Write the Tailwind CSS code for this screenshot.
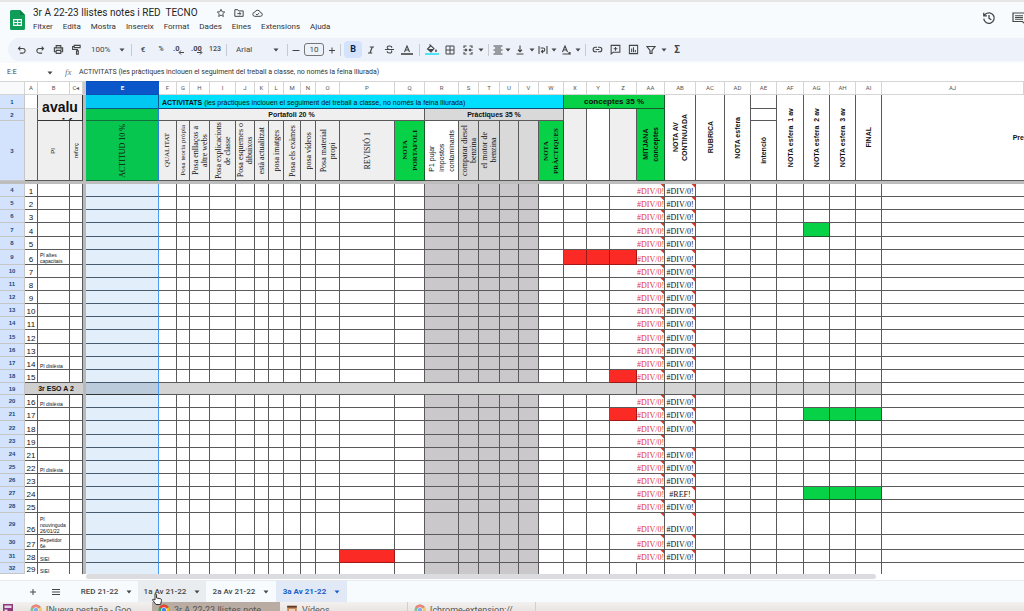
<!DOCTYPE html>
<html lang="ca">
<head>
  <meta charset="UTF-8" />
  <meta name="viewport" content="width=device-width, initial-scale=1.0" />
  <title>3r A 22-23 llistes notes i RED TECNO</title>
  <script src="https://cdn.jsdelivr.net/npm/@tailwindcss/browser@4"></script>
</head>
<body class="flex h-screen flex-col overflow-hidden bg-[#f8fbfe] font-[Roboto,'Liberation_Sans',sans-serif] text-[#444746]">
  <!-- shared symbols -->
  <svg class="hidden">
    <symbol id="caret" viewBox="0 0 6 4"><path d="M.5.5h5L3 3.5z" fill="currentColor" /></symbol>
    <symbol id="chrome" viewBox="0 0 24 24">
      <circle cx="12" cy="12" r="11" fill="#34a853" />
      <path d="M12 12 2.5 6.500A11 11 0 0 1 21.500 6.500z" fill="#ea4335" />
      <path d="M12 12 21.500 6.500A11 11 0 0 1 12 23z" fill="#fbbc05" />
      <circle cx="12" cy="12" r="5.500" fill="#fff" /><circle cx="12" cy="12" r="4.300" fill="#4285f4" />
    </symbol>
  </svg>

  <header class="flex h-[38px] shrink-0 items-start border-t-2 border-[#e6e6e6] pl-2.5">
    <svg class="mt-2 h-5 w-[15px]" viewBox="0 0 15 20">
      <path d="M1.500 0H10l5 5v13.500a1.500 1.500 0 0 1-1.500 1.500h-12A1.500 1.500 0 0 1 0 18.500v-17A1.500 1.500 0 0 1 1.500 0z" fill="#0f9d58" />
      <path d="M10 0l5 5h-5z" fill="#087f43" />
      <path d="M3 9h9v7H3zM4.200 10.200v1.700H7v-1.700zm3.900 0v1.700h2.700v-1.700zM4.200 13v1.800H7V13zm3.900 0v1.800h2.700V13z" fill="#fff" fill-rule="evenodd" />
    </svg>
    <div class="ml-2 mt-1 flex-1">
      <div class="flex h-[14px] items-center">
        <h1 class="whitespace-pre text-[10px] leading-[14px] text-[#1f1f1f]">3r A 22-23 llistes notes i RED  TECNO</h1>
        <div class="ml-[18px] flex gap-2 text-[#444746]">
          <button aria-label="Destaca"><svg class="size-2.5" viewBox="0 0 24 24" fill="none" stroke="currentColor" stroke-width="2.200"><path d="M12 3l2.700 6 6.300.6-4.800 4.300 1.500 6.500L12 17l-5.700 3.400 1.500-6.500L3 9.600 9.300 9z" /></svg></button>
          <button aria-label="Mou"><svg class="size-2.5" viewBox="0 0 24 24" fill="none" stroke="currentColor" stroke-width="2.400"><path d="M2 4h7l2 3h11v13H2zM8 13.500h8M13 10l3.500 3.500L13 17" /></svg></button>
          <button aria-label="Estat del document"><svg class="h-2.5 w-[11px]" viewBox="0 0 26 24" fill="none" stroke="currentColor" stroke-width="2.300"><path d="M7 20a5 5 0 0 1-.5-10A7 7 0 0 1 20 11a4.500 4.500 0 0 1 0 9zM9 14l3 3 5-5" /></svg></button>
        </div>
      </div>
      <nav class="flex h-[14px] items-center gap-2.5 text-[8px] text-[#333]">
        <button>Fitxer</button><button>Edita</button><button>Mostra</button><button>Insereix</button><button>Format</button><button>Dades</button><button>Eines</button><button>Extensions</button><button>Ajuda</button>
      </nav>
    </div>
    <button class="mt-[9px]" aria-label="Historial"><svg class="size-[14px]" viewBox="0 0 24 24" fill="none" stroke="currentColor" stroke-width="2.200"><path d="M3 13a9 9 0 1 0 2.700-7.400L3 8M3 3v5.500h5.500M12 7v5.500l4 2.500" /></svg></button>
    <button class="ml-4 mt-2.5 w-3 overflow-hidden" aria-label="Comentaris"><svg class="h-[13px] w-[14px]" viewBox="0 0 28 26" fill="none" stroke="currentColor" stroke-width="2.400"><path d="M2 2h24v22l-5-5H2zM6 7.500h16M6 11h16M6 14.500h16" /></svg></button>
  </header>

  <!-- toolbar -->
  <div class="ml-2 flex h-[23px] shrink-0 items-center rounded-l-full bg-[#ecf1fa] pl-[5px] text-[8px]">
    <button class="flex w-[18px] justify-center" aria-label="Desfés"><svg class="size-2.5" viewBox="0 0 24 24" fill="none" stroke="currentColor" stroke-width="2.600"><path d="M8 4L3.500 8.500 8 13M4 8.500h10a5.500 5.500 0 0 1 0 11H7" /></svg></button>
    <button class="flex w-[18px] justify-center" aria-label="Refés"><svg class="size-2.5" viewBox="0 0 24 24" fill="none" stroke="currentColor" stroke-width="2.600"><path d="M16 4l4.500 4.500L16 13M20 8.500H10a5.500 5.500 0 0 0 0 11h7" /></svg></button>
    <button class="flex w-[18px] justify-center" aria-label="Imprimeix"><svg class="size-[11px]" viewBox="0 0 24 24" fill="none" stroke="currentColor" stroke-width="2.400"><path d="M7 8V3.500h10V8M7 17H3V8.500h18V17h-4M7 14h10v6.500H7zM17 11.300h2" /></svg></button>
    <button class="flex w-[18px] justify-center" aria-label="Copia el format"><svg class="size-[11px]" viewBox="0 0 24 24" fill="none" stroke="currentColor" stroke-width="2.400"><path d="M7 3h13v5H7zM7 5.500H3.500V12H14v3M12 15h4v7h-4z" /></svg></button>
    <label class="flex w-[44px] items-center pl-1.5"><select aria-label="Zoom" class="w-[28px] appearance-none text-[8px]"><option>100%</option></select><svg class="h-1 w-1.5"><use href="#caret" /></svg></label>
    <i class="mx-0.5 h-3 w-px bg-[#c7cbd1]"></i>
    <button class="w-[18px] font-medium">€</button>
    <button class="w-[18px] text-[7px] font-medium">%</button>
    <button class="flex w-[18px] justify-center" aria-label="Menys decimals"><svg class="h-[11px] w-3" viewBox="0 0 24 22"><text x="0" y="13" font-size="15" font-weight="700" fill="currentColor">.0</text><path d="M22 17h-9M16 13l-4 4 4 4" fill="none" stroke="currentColor" stroke-width="2" /></svg></button>
    <button class="flex w-[18px] justify-center" aria-label="Més decimals"><svg class="h-[11px] w-3" viewBox="0 0 24 22"><text x="0" y="13" font-size="15" font-weight="700" fill="currentColor">.00</text><path d="M12 17h9M18 13l4 4-4 4" fill="none" stroke="currentColor" stroke-width="2" /></svg></button>
    <button class="w-[18px] text-[7px] font-medium">123</button>
    <i class="mx-0.5 h-3 w-px bg-[#c7cbd1]"></i>
    <label class="flex w-14 items-center pl-[7px]"><select aria-label="Tipus de lletra" class="w-[37px] appearance-none text-[8px]"><option>Arial</option></select><svg class="h-1 w-1.5"><use href="#caret" /></svg></label>
    <i class="mx-0.5 h-3 w-px bg-[#c7cbd1]"></i>
    <button class="flex w-3 justify-center" aria-label="Redueix"><svg class="size-2" viewBox="0 0 8 8" stroke="currentColor"><path d="M.5 4.500h7" /></svg></button>
    <input aria-label="Mida de la lletra" value="10" class="mx-0.5 h-[13px] w-5 rounded-[3px] border border-[#747775] text-center text-[8px]" />
    <button class="flex w-3 justify-center" aria-label="Augmenta"><svg class="size-2" viewBox="0 0 8 8" stroke="currentColor"><path d="M1 4.500h6M4 1.500v6" /></svg></button>
    <i class="mx-0.5 h-3 w-px bg-[#c7cbd1]"></i>
    <div class="flex items-center px-px">
      <button class="flex h-[17px] w-[18px] items-center justify-center rounded-sm bg-[#d3e3fd] text-[9px] font-bold text-[#041e49]">B</button>
      <button class="flex w-[18px] justify-center" aria-label="Cursiva"><svg class="size-2" viewBox="0 0 16 16" fill="none" stroke="currentColor" stroke-width="2.400"><path d="M5.500 2H14M2 14h8.500M10.500 2l-4.500 12" /></svg></button>
      <button class="flex w-[18px] justify-center" aria-label="Ratllat"><svg class="size-[11px]" viewBox="0 0 24 24" fill="none" stroke="currentColor" stroke-width="2.300"><path d="M2 12h20M17 8c0-5-10-5-10-.5 0 2 1.500 3 3 3.500M7 16c0 5 10 5 10 .5 0-1-.3-1.700-1-2.300" /></svg></button>
      <button class="flex w-[18px] flex-col items-center" aria-label="Color del text"><svg class="h-2 w-[14px]" viewBox="0 0 28 16" fill="none" stroke="currentColor" stroke-width="2.200"><path d="M9 14L14 2l5 12M11 10h6" /></svg><i class="h-0.5 w-3 bg-[#666]"></i></button>
    </div>
    <i class="mx-0.5 h-3 w-px bg-[#c7cbd1]"></i>
    <div class="flex items-center px-px">
      <button class="flex w-[18px] flex-col items-center" aria-label="Color d'emplenament"><svg class="h-[9px] w-3" viewBox="0 0 24 18"><path d="M7 1l9 8-6 7-7-6 6-6" fill="none" stroke="currentColor" stroke-width="2.200" /><path d="M4 10h11l-5 6zM20 10c3 4 2 6 0 6s-3-2 0-6z" fill="currentColor" /></svg><i class="h-0.5 w-3.5 bg-[#4be3f5]"></i></button>
      <button class="flex w-[18px] justify-center" aria-label="Vores"><svg class="size-2.5" viewBox="0 0 20 20" fill="none" stroke="currentColor" stroke-width="2"><path d="M2 2h16v16H2zM10 2v16M2 10h16" /></svg></button>
      <button class="flex w-[18px] justify-center" aria-label="Combina"><svg class="size-2.5" viewBox="0 0 20 20" fill="none" stroke="currentColor" stroke-width="2.200"><path d="M7 2H2v4M13 2h5v4M7 18H2v-4M13 18h5v-4M1 10h6M5 7.500L7.500 10 5 12.500M19 10h-6M15 7.500L12.500 10l2.500 2.500" /></svg></button>
      <svg class="mx-px h-1 w-1.5"><use href="#caret" /></svg>
    </div>
    <i class="mx-0.5 h-3 w-px bg-[#c7cbd1]"></i>
    <div class="flex items-center px-px">
      <button class="flex w-3 justify-center" aria-label="Alineació horitzontal"><svg class="size-2.5" viewBox="0 0 20 20" stroke="currentColor" stroke-width="2"><path d="M1 2h18M4 6h12M1 10h18M4 14h12M1 18h18" /></svg></button>
      <svg class="mx-px h-1 w-1.5"><use href="#caret" /></svg>
      <button class="flex w-4 justify-center" aria-label="Alineació vertical"><svg class="size-2.5" viewBox="0 0 20 20" fill="none" stroke="currentColor" stroke-width="2.200"><path d="M3 18h14M10 1v12M6 9.500l4 4 4-4" /></svg></button>
      <svg class="mx-px h-1 w-1.5"><use href="#caret" /></svg>
      <button class="flex w-3.5 justify-center" aria-label="Ajust del text"><svg class="size-2.5" viewBox="0 0 20 20" fill="none" stroke="currentColor" stroke-width="2.200"><path d="M2 2v16M18 2v16M5 6h5a3.500 3.500 0 0 1 0 7H7M10 10l-3 3 3 3" /></svg></button>
      <svg class="mx-px h-1 w-1.5"><use href="#caret" /></svg>
      <button class="flex w-4 justify-center" aria-label="Rotació del text"><svg class="size-2.5" viewBox="0 0 20 20" fill="none" stroke="currentColor" stroke-width="2.200"><path d="M3 14L8 2l5 12M5 10h6M3 18h14M15 15l3 3V14" /></svg></button>
      <svg class="mx-px h-1 w-1.5"><use href="#caret" /></svg>
    </div>
    <i class="mx-0.5 h-3 w-px bg-[#c7cbd1]"></i>
    <button class="flex w-[18px] justify-center" aria-label="Enllaç"><svg class="size-[11px]" viewBox="0 0 24 24" fill="none" stroke="currentColor" stroke-width="2.400"><path d="M11 7H7.500a5 5 0 0 0 0 10H11M13 7h3.500a5 5 0 0 1 0 10H13M8 12h8" /></svg></button>
    <button class="flex w-[18px] justify-center" aria-label="Comentari"><svg class="size-[11px]" viewBox="0 0 24 24" fill="none" stroke="currentColor" stroke-width="2.300"><path d="M2.500 3h19v15H7l-4.500 3.500zM12 6.500v8M8 10.500h8" /></svg></button>
    <button class="flex w-[18px] justify-center" aria-label="Gràfic"><svg class="size-[11px]" viewBox="0 0 24 24" fill="none" stroke="currentColor" stroke-width="2.300"><path d="M3 3h18v18H3zM8 10v8M12 7v11M16 13v5" /></svg></button>
    <button class="flex w-[18px] justify-center" aria-label="Filtre"><svg class="size-2.5" viewBox="0 0 20 20" fill="none" stroke="currentColor" stroke-width="2.400"><path d="M2 3h16l-6 8v6H8v-6z" /></svg></button>
    <svg class="mx-px h-1 w-1.5"><use href="#caret" /></svg>
    <button class="w-[18px] text-[10px] font-bold">Σ</button>
  </div>

  <!-- formula bar -->
  <div class="mt-0.5 flex h-[18px] shrink-0 items-center bg-white pl-[7px] pt-px text-[7px]">
    <input aria-label="Quadre de nom" value="E:E" class="w-10 text-[7px]" />
    <svg class="h-1 w-1.5"><use href="#caret" /></svg>
    <span class="ml-3 w-3.5 font-['Liberation_Serif',serif] text-[9px] italic text-[#777]">fx</span>
    <input aria-label="Barra de fórmules" value="ACTIVITATS (les pràctiques inclouen el seguiment del treball a classe, no només la feina lliurada)" class="flex-1 text-[7px] text-[#333]" />
  </div>

  <table class="w-full shrink-0 table-fixed border-separate border-spacing-0 bg-white font-['Liberation_Sans',Arial,sans-serif] text-[7px] leading-none text-[#111]">
    <colgroup id="cols"></colgroup>
    <thead>
      <tr id="letters" class="h-[14px] font-[Roboto,sans-serif] text-[6px] text-[#555]"></tr>
      <tr class="h-[14px]">
        <th class="border-b border-r border-[#c4c7c5] bg-[#d3e3fd] text-[6px] text-[#174a80]">1</th>
        <td class="border-b border-r border-b-[#ddd] border-r-[#5a5a5a] bg-white"></td>
        <td colspan="2" rowspan="2" class="border-b border-r border-[#333] bg-[#efeff0] p-0">
          <div class="flex h-[25px] items-center justify-center overflow-hidden text-center text-[14px] font-bold leading-[17px]">3a<br>avalu<br>ació</div>
        </td>
        <td rowspan="3" class="bg-[#b9b9b9]"></td>
        <td class="border-b border-r border-[#0b5b8a] bg-[#00c8f2]"></td>
        <td colspan="18" class="overflow-hidden whitespace-nowrap border-b border-r border-[#0b4b7a] bg-[#00dfff] pb-0 pl-[3px] pr-0 pt-0.5"><b>ACTIVITATS</b> (les pràctiques inclouen el seguiment del treball a classe, no només la feina lliurada)</td>
        <th colspan="4" class="border-b border-r border-[#1a5a2a] bg-[#07d146] p-0 text-[8px]">conceptes 35 %</th>
        <td rowspan="3" class="border-b border-r border-[#5a5a5a] p-0 text-center"><div class="inline-block rotate-180 whitespace-pre text-center align-middle font-bold leading-[9px] [writing-mode:vertical-rl]">NOTA AV
CONTINUADA</div></td>
        <td rowspan="3" class="border-b border-r border-[#5a5a5a] p-0 text-center"><div class="inline-block rotate-180 whitespace-pre align-middle font-bold leading-[9px] [writing-mode:vertical-rl]">RUBRICA</div></td>
        <td rowspan="3" class="border-b border-r border-[#5a5a5a] p-0 text-center"><div class="inline-block rotate-180 whitespace-pre align-middle font-bold leading-[9px] [writing-mode:vertical-rl]">NOTA esfera</div></td>
        <td class="border-b border-r border-[#5a5a5a]"></td>
        <td rowspan="3" class="border-b border-r border-[#5a5a5a] p-0 text-center"><div class="inline-block rotate-180 whitespace-pre align-middle font-bold leading-[9px] [writing-mode:vertical-rl]">NOTA esfera  1 av</div></td>
        <td rowspan="3" class="border-b border-r border-[#5a5a5a] p-0 text-center"><div class="inline-block rotate-180 whitespace-pre align-middle font-bold leading-[9px] [writing-mode:vertical-rl]">NOTA esfera  2 av</div></td>
        <td rowspan="3" class="border-b border-r border-[#5a5a5a] p-0 text-center"><div class="inline-block rotate-180 whitespace-pre align-middle font-bold leading-[9px] [writing-mode:vertical-rl]">NOTA esfera  3 av</div></td>
        <td rowspan="3" class="border-b border-r border-[#5a5a5a] p-0 text-center"><div class="inline-block rotate-180 whitespace-pre align-middle font-bold leading-[9px] [writing-mode:vertical-rl]">FINAL</div></td>
        <th rowspan="3" class="border-b border-[#5a5a5a] p-0 text-right">Pre</th>
      </tr>
      <tr class="h-3">
        <th class="border-b border-r border-[#c4c7c5] bg-[#d3e3fd] text-[6px] text-[#174a80]">2</th>
        <td rowspan="2" class="border-b border-r border-[#5a5a5a] bg-[#efeff0]"></td>
        <td class="border-b border-r border-[#14703a] border-r-[#2b7de0] bg-[#06c650]"></td>
        <th colspan="12" class="border-b border-r border-[#5a5a5a] bg-[#efeff0] p-0">Portafoli 20 %</th>
        <th colspan="6" class="border-b border-r border-[#5a5a5a] bg-[#d9d9da] p-0">Pràctiques 35 %</th>
        <td rowspan="2" class="border-b border-r border-[#5a5a5a] bg-[#efeff0]"></td>
        <td rowspan="2" class="border-b border-r border-[#5a5a5a]"></td>
        <td rowspan="2" class="border-b border-r border-[#5a5a5a] bg-[#efeff0]"></td>
        <td rowspan="2" class="border-b border-r border-[#1a5a2a] bg-[#07d146] p-0 text-center"><div class="inline-block rotate-180 whitespace-pre text-center align-middle font-bold leading-[10px] [writing-mode:vertical-rl]">MITJANA
conceptes</div></td>
        <td class="border-b border-r border-[#5a5a5a]"></td>
      </tr>
      <tr id="titles" class="h-[60px]">
        <th class="border-b border-r border-[#c4c7c5] bg-[#d3e3fd] text-[6px] text-[#174a80]">3</th>
      </tr>
      <tr class="h-[3px]"><td colspan="37" class="bg-[#bdbdbd] p-0"></td></tr>
    </thead>
    <tbody id="rows"></tbody>
  </table>

  <!-- horizontal scrollbar -->
  <div class="flex h-1.5 shrink-0 bg-white pl-[86px] pr-[148px]"><div class="h-[5px] flex-1 rounded-full bg-[#dadce0]"></div></div>

  <!-- sheet tabs -->
  <div class="flex h-[22px] shrink-0 items-stretch border-t border-[#e8ebee] pl-6 text-[8px] font-medium">
    <button class="flex w-[18px] items-center justify-center" aria-label="Afegeix un full"><svg class="size-2" viewBox="0 0 8 8" stroke="currentColor"><path d="M1 4h6M4 1v6" /></svg></button>
    <button class="ml-1 mr-[9px] flex w-5 items-center justify-center" aria-label="Tots els fulls"><svg class="size-2" viewBox="0 0 8 8" stroke="currentColor"><path d="M0 1.500h8M0 4h8M0 6.500h8" /></svg></button>
    <button class="flex w-[63px] items-center justify-center gap-2">RED 21-22<svg class="h-1 w-1.5"><use href="#caret" /></svg></button>
    <button class="relative flex w-[68px] items-center justify-center gap-2 bg-[#e9edf0]">1a Av 21-22<svg class="h-1 w-1.5"><use href="#caret" /></svg>
      <svg class="absolute left-3.5 top-3 z-10 h-3 w-2.5" viewBox="0 0 20 24"><path d="M6 2c2-1 3 0 3 2v6l8 1.500c2 .5 2 2 2 4L17 23H8l-7-9c0-2 2-2 5 0z" fill="#fff" stroke="#222" stroke-width="1.800" /></svg>
    </button>
    <button class="flex w-[70px] items-center justify-center gap-2">2a Av 21-22<svg class="h-1 w-1.5"><use href="#caret" /></svg></button>
    <button class="flex w-[71px] items-center justify-center gap-2 bg-[#e1e9f7] font-bold text-[#1a5fc8]">3a Av 21-22<svg class="h-1 w-1.5"><use href="#caret" /></svg></button>
  </div>

  <!-- desktop taskbar -->
  <div class="flex h-6 shrink-0 bg-linear-to-b from-[#f3f1f0] to-[#d8d0ca] text-[9px] text-[#555]">
    <div class="w-[25px] pl-[3px] pt-0.5"><svg class="size-2.5" viewBox="0 0 20 20"><path d="M0 0h20v20H0z" fill="#8b3a7b" /><path d="M3 3h14v5H3zM3 11h6v6H3z" fill="#e8d6e6" /></svg></div>
    <button class="flex w-[127px] items-start gap-1 pl-[5px] pt-0.5"><svg class="size-3 opacity-60"><use href="#chrome" /></svg><span class="leading-3">[Nueva pestaña - Goo…</span></button>
    <button class="flex w-32 items-start gap-1 bg-[#b9aca2] pl-1.5 pt-0.5"><svg class="size-3"><use href="#chrome" /></svg><span class="leading-3">3r A 22-23 llistes note…</span></button>
    <button class="flex w-32 items-start gap-1 border-r border-[#d5cfca] pl-1.5 pt-0.5"><svg class="size-3" viewBox="0 0 20 20"><path d="M2 3h16v14H2z" fill="#c98a5a" /><path d="M2 3h16v3H2z" fill="#5b3b2a" /><path d="M5 9h10v2H5z" fill="#fff" /></svg><span class="leading-3">Vídeos</span></button>
    <button class="flex w-32 items-start gap-1 border-r border-[#d5cfca] pl-1.5 pt-0.5"><svg class="size-3 opacity-60"><use href="#chrome" /></svg><span class="leading-3">[chrome-extension://…</span></button>
  </div>

  <script>
    // column letter, width (the last one takes what is left)
    const columns = [
      ["", 25], ["A", 13], ["B", 32], ["C", 13], ["|", 3], ["E", 73], ["F", 18], ["G", 13], ["H", 20], ["I", 26],
      ["J", 19], ["K", 14], ["L", 15], ["M", 17], ["N", 15], ["O", 24], ["P", 55], ["Q", 30], ["R", 34], ["S", 20],
      ["T", 21], ["U", 19], ["V", 20], ["W", 25], ["X", 23], ["Y", 23], ["Z", 27], ["AA", 28], ["AB", 31], ["AC", 29],
      ["AD", 26], ["AE", 26], ["AF", 27], ["AG", 26], ["AH", 26], ["AI", 26], ["AJ", 0]
    ];
    document.getElementById("cols").innerHTML = columns.map(c => c[1] ? `<col style="width:${c[1]}px">` : "<col>").join("");

    document.getElementById("letters").innerHTML = columns.map(([name]) => {
      if (name === "|") return `<th class="border-y border-[#d5d5d5] bg-[#c9c9c9] p-0"></th>`;
      if (name === "E") return `<th class="border-y border-[#0b50b8] bg-[#0b57c9] p-0 font-bold text-white">E</th>`;
      if (name === "") return `<th class="border-y border-r border-[#d5d5d5] bg-[#f8f9fa] p-0"></th>`;
      if (name === "C") return `<th class="border-y border-r border-[#d5d5d5] p-0 font-normal">C◂</th>`;
      return `<th class="border-y border-r border-[#d5d5d5] p-0 font-normal">${name}</th>`;
    }).join("");

    // row 3: rotated headings
    const light = "border-b border-r border-[#5a5a5a] bg-[#efeff0] p-0 text-center";
    const grey = "border-b border-r border-[#5a5a5a] bg-[#d9d9da] p-0 text-center";
    const green = "border-b border-r border-[#1a5a2a] bg-[#07d146] p-0 text-center";
    const sans = "inline-block rotate-180 whitespace-pre text-center align-middle text-[6px] leading-[9px] [writing-mode:vertical-rl]";
    const sansLeft = "inline-block rotate-180 whitespace-pre text-left align-middle leading-[10px] [writing-mode:vertical-rl]";
    const sansBold = "inline-block rotate-180 whitespace-pre text-center align-middle font-bold leading-[9px] [writing-mode:vertical-rl]";
    const caps = "inline-block rotate-180 whitespace-pre text-center align-middle font-['Liberation_Serif',serif] text-[7px] leading-[9px] [writing-mode:vertical-rl]";
    const serif = "inline-block rotate-180 whitespace-pre text-center align-middle font-['Liberation_Serif',serif] text-[8px] leading-[9px] [writing-mode:vertical-rl]";
    const serifBold = "inline-block rotate-180 whitespace-pre text-center align-middle font-['Liberation_Serif',serif] text-[7px] font-bold leading-[10px] [writing-mode:vertical-rl]";
    const titles = [
      ["PI", light, sans], ["reforç", light, sans],
      ["ACTITUD 10 %", "border-b border-r border-[#14703a] border-r-[#2b7de0] bg-[#06c650] p-0 text-center", serif],
      ["QUALITAT", light, caps], ["Posa teoria pròpia", light, caps], ["Posa enllaços a\naltre webs", light, serif],
      ["Posa explicacions\nde classe", light, serif], ["Posa esquemes o\ndibuixos", light, serif], ["està actualitzat", light, serif],
      ["posa imatges", light, serif], ["Posa els exàmes", light, serif], ["posa vídeos", light, serif],
      ["Posa material\npropi", light, serif], ["REVISIÓ 1", light, serif], ["NOTA\nPORTAFOLI", green, serifBold],
      ["P1 pujar\nimpostos\ncontaminants", "border-b border-r border-[#5a5a5a] bg-white p-0 text-center", sansLeft],
      ["comparar diesel\nbenzina", grey, serif], ["el motor de\nbenzina", grey, serif], ["", grey, serif], ["", grey, serif],
      ["NOTA\nPRÀCTIQUES", green, serifBold],
      ["intenció", "border-b border-r border-[#5a5a5a] p-0 text-center", sansBold]
    ];
    document.getElementById("titles").innerHTML += titles.map(([text, cell, label]) => `<td class="${cell}"><div class="${label}">${text}</div></td>`).join("");

    // sheet row, height, list number, note
    const rows = [
      [4, 13, 1], [5, 13, 2], [6, 13, 3], [7, 14, 4], [8, 13, 5], [9, 15, 6, "PI altes<br>capacitats"], [10, 13, 7],
      [11, 13, 8], [12, 13, 9], [13, 13, 10], [14, 13, 11], [15, 14, 12], [16, 13, 13], [17, 13, 14, "PI dislèxia"],
      [18, 13, 15], [19, 12], [20, 13, 16, "PI dislèxia"], [21, 13, 17], [22, 14, 18], [23, 13, 19], [24, 13, 21],
      [25, 13, 22, "PI dislèxia"], [26, 13, 23], [27, 13, 24], [28, 13, 25], [29, 22, 26, "PI<br>nouvinguda<br>26/01/22"],
      [30, 15, 27, "Repetidor<br>6è"], [31, 13, 28, "SIEI"], [32, 11, 29, "SIEI"]
    ];
    const red = ["X9", "Y9", "Z9", "Z18", "Z21", "P31"];
    const passed = ["AG7", "AG21", "AH21", "AI21", "AG27", "AH27", "AI27"];

    function cell(name, row, num, note) {
      const key = name + row;
      if (name === "") return `<th class="border-b border-r border-[#c4c7c5] bg-[#d3e3fd] p-0 text-[6px] text-[#174a80]">${row}</th>`;
      if (name === "|") return `<td class="bg-[#b9b9b9] p-0"></td>`;
      if (name === "A") return `<td class="border-b border-r border-[#5a5a5a] p-0 text-center align-bottom text-[8px]">${num}</td>`;
      if (name === "B") return `<td class="border-b border-r border-[#5a5a5a] py-0 pl-0.5 pr-0 align-bottom text-[5px] leading-[6px]">${note || ""}</td>`;
      if (name === "E") return `<td class="border-b border-r border-b-[#46586c] border-r-[#4a9cf2] bg-[#e3eefb] p-0"></td>`;
      if (red.includes(key)) return `<td class="border-b border-r border-[#a01818] bg-[#fb2a24] p-0"></td>`;
      if (passed.includes(key)) return `<td class="border-b border-r border-[#1a5a2a] bg-[#07d146] p-0"></td>`;
      if (["R", "S", "T", "U", "V"].includes(name)) return `<td class="border-b border-r border-[#5a5a5a] bg-[#cac8ca] p-0"></td>`;
      if (name === "Z" && row !== 32) return `<td class="border-b border-[#5a5a5a] p-0"></td>`;
      if (name === "AA" && row !== 32) return `<td class="overflow-hidden whitespace-nowrap border-b border-r border-[#5a5a5a] bg-[linear-gradient(225deg,#d8392b_2px,transparent_3px)] p-0 align-bottom font-['Liberation_Serif',serif] text-[8px] text-[#e0352b]">#DIV/0!</td>`;
      if (name === "AB" && row !== 32 && row !== 23) return `<td class="overflow-hidden whitespace-nowrap border-b border-r border-[#5a5a5a] bg-[linear-gradient(225deg,#d8392b_2px,transparent_3px)] p-0 text-center align-bottom font-['Liberation_Serif',serif] text-[8px]">${row === 27 ? "#REF!" : "#DIV/0!"}</td>`;
      if (name === "AJ") return `<td class="border-b border-[#5a5a5a] p-0"></td>`;
      return `<td class="border-b border-r border-[#5a5a5a] p-0"></td>`;
    }

    document.getElementById("rows").innerHTML = rows.map(([row, height, num, note]) => {
      let cells;
      if (row === 19) {
        cells = cell("", 19) +
          `<th colspan="3" class="border-b border-[#333] bg-[#cfcfcf] p-0 pl-1 text-[7px]">3r ESO A 2</th>` +
          cell("|", 19) +
          `<td class="border-b border-r border-b-[#333] border-r-[#4a9cf2] bg-[#bccbdc] p-0"></td>` +
          `<td colspan="21" class="border-b border-r border-[#5a5a5a] bg-[#d4d4d4] p-0"></td>` +
          `<td class="border-b border-r border-[#5a5a5a] bg-[#d4d4d4] p-0"></td>`.repeat(9) +
          cell("AJ", 19);
      } else {
        cells = columns.map(([name]) => cell(name, row, num, note)).join("");
      }
      return `<tr class="last:[&>td]:border-b-0" style="height:${height}px">${cells}</tr>`;
    }).join("");
  </script>
</body>
</html>
